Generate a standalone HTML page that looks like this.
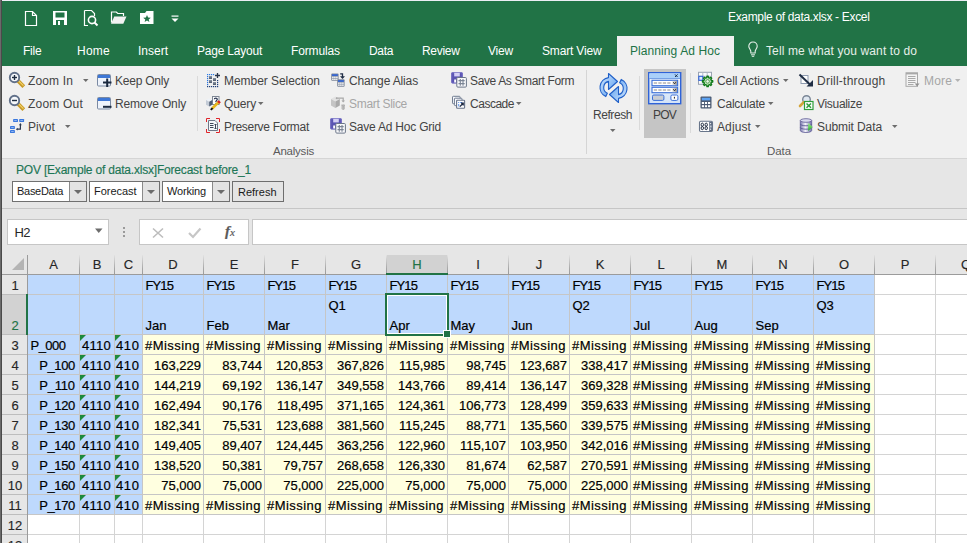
<!DOCTYPE html>
<html><head><meta charset="utf-8"><style>
html,body{margin:0;padding:0;}
body{width:967px;height:543px;overflow:hidden;position:relative;background:#ffffff;font-family:"Liberation Sans", sans-serif;}
.t{position:absolute;white-space:pre;}
svg{position:absolute;overflow:visible;}
</style></head><body>
<div style="position:absolute;left:0px;top:0px;width:967px;height:66px;background:#217346"></div>
<div style="position:absolute;left:0px;top:0px;width:967px;height:1px;background:#eceef5"></div>
<div style="position:absolute;left:617px;top:36px;width:117px;height:30px;background:#f0f0f0"></div>
<div style="position:absolute;left:0px;top:66px;width:967px;height:92px;background:#f0f0f0"></div>
<div style="position:absolute;left:0px;top:158px;width:967px;height:1px;background:#d5d5d5"></div>
<div style="position:absolute;left:0px;top:159px;width:967px;height:96px;background:#e6e6e6"></div>
<div style="position:absolute;left:0px;top:208px;width:967px;height:1px;background:#c6c6c6"></div>
<div style="position:absolute;left:12px;top:181px;width:75px;height:21px;background:#ffffff;border:1px solid #707070;box-sizing:border-box"></div>
<div style="position:absolute;left:69px;top:182px;width:17px;height:19px;background:#e3e3e3;border-left:1px solid #8a8a8a;box-sizing:border-box"></div>
<div style="position:absolute;left:89px;top:181px;width:71px;height:21px;background:#ffffff;border:1px solid #707070;box-sizing:border-box"></div>
<div style="position:absolute;left:142px;top:182px;width:17px;height:19px;background:#e3e3e3;border-left:1px solid #8a8a8a;box-sizing:border-box"></div>
<div style="position:absolute;left:162px;top:181px;width:68px;height:21px;background:#ffffff;border:1px solid #707070;box-sizing:border-box"></div>
<div style="position:absolute;left:212px;top:182px;width:17px;height:19px;background:#e3e3e3;border-left:1px solid #8a8a8a;box-sizing:border-box"></div>
<div style="position:absolute;left:232px;top:181px;width:52px;height:21px;background:#e4e4e4;border:1px solid #6e6e6e;box-sizing:border-box"></div>
<div style="position:absolute;left:7px;top:219px;width:102px;height:26px;background:#ffffff;border:1px solid #c6c6c6;box-sizing:border-box"></div>
<div style="position:absolute;left:123px;top:227px;width:2px;height:2px;background:#9a9a9a"></div>
<div style="position:absolute;left:123px;top:231px;width:2px;height:2px;background:#9a9a9a"></div>
<div style="position:absolute;left:123px;top:235px;width:2px;height:2px;background:#9a9a9a"></div>
<div style="position:absolute;left:139px;top:219px;width:110px;height:26px;background:#ffffff;border:1px solid #c6c6c6;box-sizing:border-box"></div>
<div style="position:absolute;left:252px;top:219px;width:730px;height:26px;background:#ffffff;border:1px solid #c6c6c6;box-sizing:border-box"></div>
<div style="position:absolute;left:2px;top:255px;width:965px;height:19px;background:#e6e6e6"></div>
<div style="position:absolute;left:2px;top:274px;width:25px;height:269px;background:#e6e6e6"></div>
<div style="position:absolute;left:387px;top:255px;width:60px;height:19px;background:#d2d2d2"></div>
<div style="position:absolute;left:2px;top:295px;width:25px;height:39px;background:#d2d2d2"></div>
<div style="position:absolute;left:28px;top:275px;width:847px;height:59px;background:#bed9fd"></div>
<div style="position:absolute;left:28px;top:335px;width:114px;height:179px;background:#bed9fd"></div>
<div style="position:absolute;left:143px;top:335px;width:732px;height:179px;background:#ffffe0"></div>
<div style="position:absolute;left:79px;top:275px;width:1px;height:239px;background:#c6c6c6"></div>
<div style="position:absolute;left:79px;top:514px;width:1px;height:29px;background:#d4d4d4"></div>
<div style="position:absolute;left:79px;top:255px;width:1px;height:19px;background:linear-gradient(#e2e2e2,#a8a8a8 70%,#9b9b9b)"></div>
<div style="position:absolute;left:114px;top:275px;width:1px;height:239px;background:#c6c6c6"></div>
<div style="position:absolute;left:114px;top:514px;width:1px;height:29px;background:#d4d4d4"></div>
<div style="position:absolute;left:114px;top:255px;width:1px;height:19px;background:linear-gradient(#e2e2e2,#a8a8a8 70%,#9b9b9b)"></div>
<div style="position:absolute;left:142px;top:275px;width:1px;height:239px;background:#c6c6c6"></div>
<div style="position:absolute;left:142px;top:514px;width:1px;height:29px;background:#d4d4d4"></div>
<div style="position:absolute;left:142px;top:255px;width:1px;height:19px;background:linear-gradient(#e2e2e2,#a8a8a8 70%,#9b9b9b)"></div>
<div style="position:absolute;left:203px;top:275px;width:1px;height:239px;background:#c6c6c6"></div>
<div style="position:absolute;left:203px;top:514px;width:1px;height:29px;background:#d4d4d4"></div>
<div style="position:absolute;left:203px;top:255px;width:1px;height:19px;background:linear-gradient(#e2e2e2,#a8a8a8 70%,#9b9b9b)"></div>
<div style="position:absolute;left:264px;top:275px;width:1px;height:239px;background:#c6c6c6"></div>
<div style="position:absolute;left:264px;top:514px;width:1px;height:29px;background:#d4d4d4"></div>
<div style="position:absolute;left:264px;top:255px;width:1px;height:19px;background:linear-gradient(#e2e2e2,#a8a8a8 70%,#9b9b9b)"></div>
<div style="position:absolute;left:325px;top:275px;width:1px;height:239px;background:#c6c6c6"></div>
<div style="position:absolute;left:325px;top:514px;width:1px;height:29px;background:#d4d4d4"></div>
<div style="position:absolute;left:325px;top:255px;width:1px;height:19px;background:linear-gradient(#e2e2e2,#a8a8a8 70%,#9b9b9b)"></div>
<div style="position:absolute;left:386px;top:275px;width:1px;height:239px;background:#c6c6c6"></div>
<div style="position:absolute;left:386px;top:514px;width:1px;height:29px;background:#d4d4d4"></div>
<div style="position:absolute;left:386px;top:255px;width:1px;height:19px;background:linear-gradient(#e2e2e2,#a8a8a8 70%,#9b9b9b)"></div>
<div style="position:absolute;left:447px;top:275px;width:1px;height:239px;background:#c6c6c6"></div>
<div style="position:absolute;left:447px;top:514px;width:1px;height:29px;background:#d4d4d4"></div>
<div style="position:absolute;left:447px;top:255px;width:1px;height:19px;background:linear-gradient(#e2e2e2,#a8a8a8 70%,#9b9b9b)"></div>
<div style="position:absolute;left:508px;top:275px;width:1px;height:239px;background:#c6c6c6"></div>
<div style="position:absolute;left:508px;top:514px;width:1px;height:29px;background:#d4d4d4"></div>
<div style="position:absolute;left:508px;top:255px;width:1px;height:19px;background:linear-gradient(#e2e2e2,#a8a8a8 70%,#9b9b9b)"></div>
<div style="position:absolute;left:569px;top:275px;width:1px;height:239px;background:#c6c6c6"></div>
<div style="position:absolute;left:569px;top:514px;width:1px;height:29px;background:#d4d4d4"></div>
<div style="position:absolute;left:569px;top:255px;width:1px;height:19px;background:linear-gradient(#e2e2e2,#a8a8a8 70%,#9b9b9b)"></div>
<div style="position:absolute;left:630px;top:275px;width:1px;height:239px;background:#c6c6c6"></div>
<div style="position:absolute;left:630px;top:514px;width:1px;height:29px;background:#d4d4d4"></div>
<div style="position:absolute;left:630px;top:255px;width:1px;height:19px;background:linear-gradient(#e2e2e2,#a8a8a8 70%,#9b9b9b)"></div>
<div style="position:absolute;left:691px;top:275px;width:1px;height:239px;background:#c6c6c6"></div>
<div style="position:absolute;left:691px;top:514px;width:1px;height:29px;background:#d4d4d4"></div>
<div style="position:absolute;left:691px;top:255px;width:1px;height:19px;background:linear-gradient(#e2e2e2,#a8a8a8 70%,#9b9b9b)"></div>
<div style="position:absolute;left:752px;top:275px;width:1px;height:239px;background:#c6c6c6"></div>
<div style="position:absolute;left:752px;top:514px;width:1px;height:29px;background:#d4d4d4"></div>
<div style="position:absolute;left:752px;top:255px;width:1px;height:19px;background:linear-gradient(#e2e2e2,#a8a8a8 70%,#9b9b9b)"></div>
<div style="position:absolute;left:813px;top:275px;width:1px;height:239px;background:#c6c6c6"></div>
<div style="position:absolute;left:813px;top:514px;width:1px;height:29px;background:#d4d4d4"></div>
<div style="position:absolute;left:813px;top:255px;width:1px;height:19px;background:linear-gradient(#e2e2e2,#a8a8a8 70%,#9b9b9b)"></div>
<div style="position:absolute;left:874px;top:275px;width:1px;height:239px;background:#c6c6c6"></div>
<div style="position:absolute;left:874px;top:514px;width:1px;height:29px;background:#d4d4d4"></div>
<div style="position:absolute;left:874px;top:255px;width:1px;height:19px;background:linear-gradient(#e2e2e2,#a8a8a8 70%,#9b9b9b)"></div>
<div style="position:absolute;left:935px;top:275px;width:1px;height:268px;background:#d4d4d4"></div>
<div style="position:absolute;left:935px;top:255px;width:1px;height:19px;background:linear-gradient(#e2e2e2,#a8a8a8 70%,#9b9b9b)"></div>
<div style="position:absolute;left:28px;top:294px;width:847px;height:1px;background:#c6c6c6"></div>
<div style="position:absolute;left:875px;top:294px;width:92px;height:1px;background:#d4d4d4"></div>
<div style="position:absolute;left:2px;top:294px;width:25px;height:1px;background:#bdbdbd"></div>
<div style="position:absolute;left:28px;top:334px;width:847px;height:1px;background:#c6c6c6"></div>
<div style="position:absolute;left:875px;top:334px;width:92px;height:1px;background:#d4d4d4"></div>
<div style="position:absolute;left:2px;top:334px;width:25px;height:1px;background:#bdbdbd"></div>
<div style="position:absolute;left:28px;top:354px;width:847px;height:1px;background:#c6c6c6"></div>
<div style="position:absolute;left:875px;top:354px;width:92px;height:1px;background:#d4d4d4"></div>
<div style="position:absolute;left:2px;top:354px;width:25px;height:1px;background:#bdbdbd"></div>
<div style="position:absolute;left:28px;top:374px;width:847px;height:1px;background:#c6c6c6"></div>
<div style="position:absolute;left:875px;top:374px;width:92px;height:1px;background:#d4d4d4"></div>
<div style="position:absolute;left:2px;top:374px;width:25px;height:1px;background:#bdbdbd"></div>
<div style="position:absolute;left:28px;top:394px;width:847px;height:1px;background:#c6c6c6"></div>
<div style="position:absolute;left:875px;top:394px;width:92px;height:1px;background:#d4d4d4"></div>
<div style="position:absolute;left:2px;top:394px;width:25px;height:1px;background:#bdbdbd"></div>
<div style="position:absolute;left:28px;top:414px;width:847px;height:1px;background:#c6c6c6"></div>
<div style="position:absolute;left:875px;top:414px;width:92px;height:1px;background:#d4d4d4"></div>
<div style="position:absolute;left:2px;top:414px;width:25px;height:1px;background:#bdbdbd"></div>
<div style="position:absolute;left:28px;top:434px;width:847px;height:1px;background:#c6c6c6"></div>
<div style="position:absolute;left:875px;top:434px;width:92px;height:1px;background:#d4d4d4"></div>
<div style="position:absolute;left:2px;top:434px;width:25px;height:1px;background:#bdbdbd"></div>
<div style="position:absolute;left:28px;top:454px;width:847px;height:1px;background:#c6c6c6"></div>
<div style="position:absolute;left:875px;top:454px;width:92px;height:1px;background:#d4d4d4"></div>
<div style="position:absolute;left:2px;top:454px;width:25px;height:1px;background:#bdbdbd"></div>
<div style="position:absolute;left:28px;top:474px;width:847px;height:1px;background:#c6c6c6"></div>
<div style="position:absolute;left:875px;top:474px;width:92px;height:1px;background:#d4d4d4"></div>
<div style="position:absolute;left:2px;top:474px;width:25px;height:1px;background:#bdbdbd"></div>
<div style="position:absolute;left:28px;top:494px;width:847px;height:1px;background:#c6c6c6"></div>
<div style="position:absolute;left:875px;top:494px;width:92px;height:1px;background:#d4d4d4"></div>
<div style="position:absolute;left:2px;top:494px;width:25px;height:1px;background:#bdbdbd"></div>
<div style="position:absolute;left:28px;top:514px;width:847px;height:1px;background:#c6c6c6"></div>
<div style="position:absolute;left:875px;top:514px;width:92px;height:1px;background:#d4d4d4"></div>
<div style="position:absolute;left:2px;top:514px;width:25px;height:1px;background:#bdbdbd"></div>
<div style="position:absolute;left:28px;top:534px;width:939px;height:1px;background:#d4d4d4"></div>
<div style="position:absolute;left:2px;top:534px;width:25px;height:1px;background:#bdbdbd"></div>
<div style="position:absolute;left:2px;top:274px;width:965px;height:1px;background:#9b9b9b"></div>
<div style="position:absolute;left:27px;top:255px;width:1px;height:288px;background:#9b9b9b"></div>
<div style="position:absolute;left:386px;top:273px;width:62px;height:2px;background:#217346"></div>
<div style="position:absolute;left:26px;top:294px;width:2px;height:41px;background:#217346"></div>
<div style="position:absolute;left:385px;top:293px;width:64px;height:43px;border:2px solid #217346;box-sizing:border-box"></div>
<div style="position:absolute;left:387px;top:295px;width:60px;height:39px;border:1px solid #ffffff;box-sizing:border-box"></div>
<div style="position:absolute;left:443px;top:330px;width:8px;height:8px;background:#ffffff"></div>
<div style="position:absolute;left:444px;top:331px;width:6px;height:6px;background:#217346"></div>
<div style="position:absolute;left:0px;top:0px;width:1px;height:543px;background:#6a6a6a"></div>
<div style="position:absolute;left:1px;top:0px;width:1px;height:543px;background:#4a4a4a"></div>
<div style="position:absolute;left:197px;top:76px;width:1px;height:55px;background:#dadada"></div>
<div style="position:absolute;left:586px;top:70px;width:1px;height:84px;background:#d5d5d5"></div>
<div style="position:absolute;left:639px;top:76px;width:1px;height:54px;background:#dadada"></div>
<div style="position:absolute;left:690px;top:73px;width:1px;height:60px;background:#dadada"></div>
<div style="position:absolute;left:644px;top:69px;width:42px;height:69px;background:#c5c5c5"></div>
<div class="t" style="left:728.00px;top:10.34px;font-size:12px;line-height:15px;color:#ffffff;letter-spacing:-0.330px;">Example of data.xlsx - Excel</div>
<div class="t" style="left:23.00px;top:44.34px;font-size:12px;line-height:15px;color:#ffffff;letter-spacing:-0.211px;">File</div>
<div class="t" style="left:77.00px;top:44.34px;font-size:12px;line-height:15px;color:#ffffff;letter-spacing:0.246px;">Home</div>
<div class="t" style="left:138.00px;top:44.34px;font-size:12px;line-height:15px;color:#ffffff;">Insert</div>
<div class="t" style="left:197.00px;top:44.34px;font-size:12px;line-height:15px;color:#ffffff;letter-spacing:-0.217px;">Page Layout</div>
<div class="t" style="left:291.00px;top:44.34px;font-size:12px;line-height:15px;color:#ffffff;letter-spacing:-0.127px;">Formulas</div>
<div class="t" style="left:369.00px;top:44.34px;font-size:12px;line-height:15px;color:#ffffff;letter-spacing:-0.340px;">Data</div>
<div class="t" style="left:422.00px;top:44.34px;font-size:12px;line-height:15px;color:#ffffff;letter-spacing:-0.310px;">Review</div>
<div class="t" style="left:488.00px;top:44.34px;font-size:12px;line-height:15px;color:#ffffff;letter-spacing:-0.199px;">View</div>
<div class="t" style="left:542.00px;top:44.34px;font-size:12px;line-height:15px;color:#ffffff;letter-spacing:-0.164px;">Smart View</div>
<div class="t" style="left:630.00px;top:44.34px;font-size:12px;line-height:15px;color:#217346;letter-spacing:0.084px;">Planning Ad Hoc</div>
<div class="t" style="left:766.00px;top:44.34px;font-size:12px;line-height:15px;color:#e6efe9;letter-spacing:0.108px;">Tell me what you want to do</div>
<div class="t" style="left:28.00px;top:74.34px;font-size:12px;line-height:15px;color:#444444;letter-spacing:0.141px;">Zoom In</div>
<div class="t" style="left:28.00px;top:97.34px;font-size:12px;line-height:15px;color:#444444;letter-spacing:0.205px;">Zoom Out</div>
<div class="t" style="left:28.00px;top:120.34px;font-size:12px;line-height:15px;color:#444444;letter-spacing:0.062px;">Pivot</div>
<div class="t" style="left:115.00px;top:74.34px;font-size:12px;line-height:15px;color:#444444;letter-spacing:-0.227px;">Keep Only</div>
<div class="t" style="left:115.00px;top:97.34px;font-size:12px;line-height:15px;color:#444444;letter-spacing:-0.155px;">Remove Only</div>
<div class="t" style="left:224.00px;top:74.34px;font-size:12px;line-height:15px;color:#444444;letter-spacing:-0.045px;">Member Selection</div>
<div class="t" style="left:224.00px;top:97.34px;font-size:12px;line-height:15px;color:#444444;letter-spacing:-0.138px;">Query</div>
<div class="t" style="left:224.00px;top:120.34px;font-size:12px;line-height:15px;color:#444444;letter-spacing:-0.291px;">Preserve Format</div>
<div class="t" style="left:349.00px;top:74.34px;font-size:12px;line-height:15px;color:#444444;letter-spacing:-0.143px;">Change Alias</div>
<div class="t" style="left:349.00px;top:97.34px;font-size:12px;line-height:15px;color:#a6a6a6;letter-spacing:-0.305px;">Smart Slice</div>
<div class="t" style="left:349.00px;top:120.34px;font-size:12px;line-height:15px;color:#444444;letter-spacing:-0.212px;">Save Ad Hoc Grid</div>
<div class="t" style="left:470.00px;top:74.34px;font-size:12px;line-height:15px;color:#444444;letter-spacing:-0.372px;">Save As Smart Form</div>
<div class="t" style="left:470.00px;top:97.34px;font-size:12px;line-height:15px;color:#444444;letter-spacing:-0.482px;">Cascade</div>
<div class="t" style="left:593.00px;top:108.34px;font-size:12px;line-height:15px;color:#444444;letter-spacing:-0.433px;">Refresh</div>
<div class="t" style="left:653.00px;top:108.34px;font-size:12px;line-height:15px;color:#404040;letter-spacing:-0.781px;">POV</div>
<div class="t" style="left:717.00px;top:74.34px;font-size:12px;line-height:15px;color:#444444;letter-spacing:-0.059px;">Cell Actions</div>
<div class="t" style="left:717.00px;top:97.34px;font-size:12px;line-height:15px;color:#444444;letter-spacing:-0.226px;">Calculate</div>
<div class="t" style="left:717.00px;top:120.34px;font-size:12px;line-height:15px;color:#444444;letter-spacing:0.107px;">Adjust</div>
<div class="t" style="left:817.00px;top:74.34px;font-size:12px;line-height:15px;color:#444444;letter-spacing:0.242px;">Drill-through</div>
<div class="t" style="left:817.00px;top:97.34px;font-size:12px;line-height:15px;color:#444444;letter-spacing:-0.312px;">Visualize</div>
<div class="t" style="left:817.00px;top:120.34px;font-size:12px;line-height:15px;color:#444444;letter-spacing:-0.094px;">Submit Data</div>
<div class="t" style="left:924.00px;top:74.34px;font-size:12px;line-height:15px;color:#a6a6a6;letter-spacing:0.164px;">More</div>
<div class="t" style="left:273.00px;top:143.52px;font-size:11.5px;line-height:14px;color:#5a5a5a;letter-spacing:-0.229px;">Analysis</div>
<div class="t" style="left:767.00px;top:143.52px;font-size:11.5px;line-height:14px;color:#5a5a5a;letter-spacing:-0.074px;">Data</div>
<div class="t" style="left:16.00px;top:163.34px;font-size:12px;line-height:15px;color:#1d7656;letter-spacing:-0.197px;-webkit-text-stroke:0.15px #1d7656">POV [Example of data.xlsx]Forecast before_1</div>
<div class="t" style="left:17.00px;top:183.69px;font-size:11px;line-height:14px;color:#1a1a1a;letter-spacing:-0.289px;">BaseData</div>
<div class="t" style="left:94.00px;top:183.69px;font-size:11px;line-height:14px;color:#1a1a1a;letter-spacing:-0.037px;">Forecast</div>
<div class="t" style="left:167.00px;top:183.69px;font-size:11px;line-height:14px;color:#1a1a1a;letter-spacing:-0.165px;">Working</div>
<div class="t" style="left:238.00px;top:185.19px;font-size:11px;line-height:14px;color:#1a1a1a;">Refresh</div>
<div class="t" style="left:14.50px;top:224.50px;font-size:13px;line-height:16px;color:#262626;letter-spacing:-0.562px;">H2</div>
<div class="t" style="left:49.16px;top:256.50px;font-size:13px;line-height:16px;color:#262626;-webkit-text-stroke:0.15px #262626">A</div>
<div class="t" style="left:92.66px;top:256.50px;font-size:13px;line-height:16px;color:#262626;-webkit-text-stroke:0.15px #262626">B</div>
<div class="t" style="left:123.80px;top:256.50px;font-size:13px;line-height:16px;color:#262626;-webkit-text-stroke:0.15px #262626">C</div>
<div class="t" style="left:168.30px;top:256.50px;font-size:13px;line-height:16px;color:#262626;-webkit-text-stroke:0.15px #262626">D</div>
<div class="t" style="left:229.66px;top:256.50px;font-size:13px;line-height:16px;color:#262626;-webkit-text-stroke:0.15px #262626">E</div>
<div class="t" style="left:291.02px;top:256.50px;font-size:13px;line-height:16px;color:#262626;-webkit-text-stroke:0.15px #262626">F</div>
<div class="t" style="left:350.94px;top:256.50px;font-size:13px;line-height:16px;color:#262626;-webkit-text-stroke:0.15px #262626">G</div>
<div class="t" style="left:412.30px;top:256.50px;font-size:13px;line-height:16px;color:#217346;-webkit-text-stroke:0.15px #217346">H</div>
<div class="t" style="left:476.19px;top:256.50px;font-size:13px;line-height:16px;color:#262626;-webkit-text-stroke:0.15px #262626">I</div>
<div class="t" style="left:535.75px;top:256.50px;font-size:13px;line-height:16px;color:#262626;-webkit-text-stroke:0.15px #262626">J</div>
<div class="t" style="left:595.66px;top:256.50px;font-size:13px;line-height:16px;color:#262626;-webkit-text-stroke:0.15px #262626">K</div>
<div class="t" style="left:657.38px;top:256.50px;font-size:13px;line-height:16px;color:#262626;-webkit-text-stroke:0.15px #262626">L</div>
<div class="t" style="left:716.58px;top:256.50px;font-size:13px;line-height:16px;color:#262626;-webkit-text-stroke:0.15px #262626">M</div>
<div class="t" style="left:778.30px;top:256.50px;font-size:13px;line-height:16px;color:#262626;-webkit-text-stroke:0.15px #262626">N</div>
<div class="t" style="left:838.94px;top:256.50px;font-size:13px;line-height:16px;color:#262626;-webkit-text-stroke:0.15px #262626">O</div>
<div class="t" style="left:900.66px;top:256.50px;font-size:13px;line-height:16px;color:#262626;-webkit-text-stroke:0.15px #262626">P</div>
<div class="t" style="left:960.94px;top:256.50px;font-size:13px;line-height:16px;color:#262626;-webkit-text-stroke:0.15px #262626">Q</div>
<div class="t" style="left:11.38px;top:277.50px;font-size:13px;line-height:16px;color:#262626;-webkit-text-stroke:0.15px #262626">1</div>
<div class="t" style="left:11.38px;top:317.50px;font-size:13px;line-height:16px;color:#217346;-webkit-text-stroke:0.15px #217346">2</div>
<div class="t" style="left:11.38px;top:337.50px;font-size:13px;line-height:16px;color:#262626;-webkit-text-stroke:0.15px #262626">3</div>
<div class="t" style="left:11.38px;top:357.50px;font-size:13px;line-height:16px;color:#262626;-webkit-text-stroke:0.15px #262626">4</div>
<div class="t" style="left:11.38px;top:377.50px;font-size:13px;line-height:16px;color:#262626;-webkit-text-stroke:0.15px #262626">5</div>
<div class="t" style="left:11.38px;top:397.50px;font-size:13px;line-height:16px;color:#262626;-webkit-text-stroke:0.15px #262626">6</div>
<div class="t" style="left:11.38px;top:417.50px;font-size:13px;line-height:16px;color:#262626;-webkit-text-stroke:0.15px #262626">7</div>
<div class="t" style="left:11.38px;top:437.50px;font-size:13px;line-height:16px;color:#262626;-webkit-text-stroke:0.15px #262626">8</div>
<div class="t" style="left:11.38px;top:457.50px;font-size:13px;line-height:16px;color:#262626;-webkit-text-stroke:0.15px #262626">9</div>
<div class="t" style="left:7.77px;top:477.50px;font-size:13px;line-height:16px;color:#262626;-webkit-text-stroke:0.15px #262626">10</div>
<div class="t" style="left:8.25px;top:497.50px;font-size:13px;line-height:16px;color:#262626;-webkit-text-stroke:0.15px #262626">11</div>
<div class="t" style="left:7.77px;top:517.50px;font-size:13px;line-height:16px;color:#262626;-webkit-text-stroke:0.15px #262626">12</div>
<div class="t" style="left:7.77px;top:537.50px;font-size:13px;line-height:16px;color:#262626;-webkit-text-stroke:0.15px #262626">13</div>
<div class="t" style="left:145.50px;top:277.50px;font-size:13px;line-height:16px;color:#000000;letter-spacing:-0.895px;-webkit-text-stroke:0.2px #000">FY15</div>
<div class="t" style="left:145.50px;top:317.50px;font-size:13px;line-height:16px;color:#000000;-webkit-text-stroke:0.2px #000">Jan</div>
<div class="t" style="left:206.50px;top:277.50px;font-size:13px;line-height:16px;color:#000000;letter-spacing:-0.895px;-webkit-text-stroke:0.2px #000">FY15</div>
<div class="t" style="left:206.50px;top:317.50px;font-size:13px;line-height:16px;color:#000000;-webkit-text-stroke:0.2px #000">Feb</div>
<div class="t" style="left:267.50px;top:277.50px;font-size:13px;line-height:16px;color:#000000;letter-spacing:-0.895px;-webkit-text-stroke:0.2px #000">FY15</div>
<div class="t" style="left:267.50px;top:317.50px;font-size:13px;line-height:16px;color:#000000;-webkit-text-stroke:0.2px #000">Mar</div>
<div class="t" style="left:328.50px;top:277.50px;font-size:13px;line-height:16px;color:#000000;letter-spacing:-0.895px;-webkit-text-stroke:0.2px #000">FY15</div>
<div class="t" style="left:328.50px;top:297.50px;font-size:13px;line-height:16px;color:#000000;-webkit-text-stroke:0.2px #000">Q1</div>
<div class="t" style="left:389.50px;top:277.50px;font-size:13px;line-height:16px;color:#000000;letter-spacing:-0.895px;-webkit-text-stroke:0.2px #000">FY15</div>
<div class="t" style="left:389.50px;top:317.50px;font-size:13px;line-height:16px;color:#000000;-webkit-text-stroke:0.2px #000">Apr</div>
<div class="t" style="left:450.50px;top:277.50px;font-size:13px;line-height:16px;color:#000000;letter-spacing:-0.895px;-webkit-text-stroke:0.2px #000">FY15</div>
<div class="t" style="left:450.50px;top:317.50px;font-size:13px;line-height:16px;color:#000000;-webkit-text-stroke:0.2px #000">May</div>
<div class="t" style="left:511.50px;top:277.50px;font-size:13px;line-height:16px;color:#000000;letter-spacing:-0.895px;-webkit-text-stroke:0.2px #000">FY15</div>
<div class="t" style="left:511.50px;top:317.50px;font-size:13px;line-height:16px;color:#000000;-webkit-text-stroke:0.2px #000">Jun</div>
<div class="t" style="left:572.50px;top:277.50px;font-size:13px;line-height:16px;color:#000000;letter-spacing:-0.895px;-webkit-text-stroke:0.2px #000">FY15</div>
<div class="t" style="left:572.50px;top:297.50px;font-size:13px;line-height:16px;color:#000000;-webkit-text-stroke:0.2px #000">Q2</div>
<div class="t" style="left:633.50px;top:277.50px;font-size:13px;line-height:16px;color:#000000;letter-spacing:-0.895px;-webkit-text-stroke:0.2px #000">FY15</div>
<div class="t" style="left:633.50px;top:317.50px;font-size:13px;line-height:16px;color:#000000;-webkit-text-stroke:0.2px #000">Jul</div>
<div class="t" style="left:694.50px;top:277.50px;font-size:13px;line-height:16px;color:#000000;letter-spacing:-0.895px;-webkit-text-stroke:0.2px #000">FY15</div>
<div class="t" style="left:694.50px;top:317.50px;font-size:13px;line-height:16px;color:#000000;-webkit-text-stroke:0.2px #000">Aug</div>
<div class="t" style="left:755.50px;top:277.50px;font-size:13px;line-height:16px;color:#000000;letter-spacing:-0.895px;-webkit-text-stroke:0.2px #000">FY15</div>
<div class="t" style="left:755.50px;top:317.50px;font-size:13px;line-height:16px;color:#000000;-webkit-text-stroke:0.2px #000">Sep</div>
<div class="t" style="left:816.50px;top:277.50px;font-size:13px;line-height:16px;color:#000000;letter-spacing:-0.895px;-webkit-text-stroke:0.2px #000">FY15</div>
<div class="t" style="left:816.50px;top:297.50px;font-size:13px;line-height:16px;color:#000000;-webkit-text-stroke:0.2px #000">Q3</div>
<div class="t" style="left:30.50px;top:337.50px;font-size:13px;line-height:16px;color:#000000;letter-spacing:-0.519px;-webkit-text-stroke:0.2px #000">P_000</div>
<div class="t" style="left:82.00px;top:337.50px;font-size:13px;line-height:16px;color:#000000;letter-spacing:0.258px;-webkit-text-stroke:0.2px #000">4110</div>
<div class="t" style="left:116.00px;top:337.50px;font-size:13px;line-height:16px;color:#000000;letter-spacing:0.599px;-webkit-text-stroke:0.2px #000">410</div>
<div class="t" style="left:145.00px;top:337.50px;font-size:13px;line-height:16px;color:#000000;letter-spacing:0.463px;-webkit-text-stroke:0.2px #000">#Missing</div>
<div class="t" style="left:206.00px;top:337.50px;font-size:13px;line-height:16px;color:#000000;letter-spacing:0.463px;-webkit-text-stroke:0.2px #000">#Missing</div>
<div class="t" style="left:267.00px;top:337.50px;font-size:13px;line-height:16px;color:#000000;letter-spacing:0.463px;-webkit-text-stroke:0.2px #000">#Missing</div>
<div class="t" style="left:328.00px;top:337.50px;font-size:13px;line-height:16px;color:#000000;letter-spacing:0.463px;-webkit-text-stroke:0.2px #000">#Missing</div>
<div class="t" style="left:389.00px;top:337.50px;font-size:13px;line-height:16px;color:#000000;letter-spacing:0.463px;-webkit-text-stroke:0.2px #000">#Missing</div>
<div class="t" style="left:450.00px;top:337.50px;font-size:13px;line-height:16px;color:#000000;letter-spacing:0.463px;-webkit-text-stroke:0.2px #000">#Missing</div>
<div class="t" style="left:511.00px;top:337.50px;font-size:13px;line-height:16px;color:#000000;letter-spacing:0.463px;-webkit-text-stroke:0.2px #000">#Missing</div>
<div class="t" style="left:572.00px;top:337.50px;font-size:13px;line-height:16px;color:#000000;letter-spacing:0.463px;-webkit-text-stroke:0.2px #000">#Missing</div>
<div class="t" style="left:633.00px;top:337.50px;font-size:13px;line-height:16px;color:#000000;letter-spacing:0.463px;-webkit-text-stroke:0.2px #000">#Missing</div>
<div class="t" style="left:694.00px;top:337.50px;font-size:13px;line-height:16px;color:#000000;letter-spacing:0.463px;-webkit-text-stroke:0.2px #000">#Missing</div>
<div class="t" style="left:755.00px;top:337.50px;font-size:13px;line-height:16px;color:#000000;letter-spacing:0.463px;-webkit-text-stroke:0.2px #000">#Missing</div>
<div class="t" style="left:816.00px;top:337.50px;font-size:13px;line-height:16px;color:#000000;letter-spacing:0.463px;-webkit-text-stroke:0.2px #000">#Missing</div>
<div class="t" style="left:39.30px;top:357.50px;font-size:13px;line-height:16px;color:#000000;letter-spacing:-0.419px;-webkit-text-stroke:0.2px #000">P_100</div>
<div class="t" style="left:82.00px;top:357.50px;font-size:13px;line-height:16px;color:#000000;letter-spacing:0.258px;-webkit-text-stroke:0.2px #000">4110</div>
<div class="t" style="left:116.00px;top:357.50px;font-size:13px;line-height:16px;color:#000000;letter-spacing:0.599px;-webkit-text-stroke:0.2px #000">410</div>
<div class="t" style="left:154.00px;top:357.50px;font-size:13px;line-height:16px;color:#000000;-webkit-text-stroke:0.2px #000">163,229</div>
<div class="t" style="left:222.23px;top:357.50px;font-size:13px;line-height:16px;color:#000000;-webkit-text-stroke:0.2px #000">83,744</div>
<div class="t" style="left:276.00px;top:357.50px;font-size:13px;line-height:16px;color:#000000;-webkit-text-stroke:0.2px #000">120,853</div>
<div class="t" style="left:337.00px;top:357.50px;font-size:13px;line-height:16px;color:#000000;-webkit-text-stroke:0.2px #000">367,826</div>
<div class="t" style="left:398.97px;top:357.50px;font-size:13px;line-height:16px;color:#000000;-webkit-text-stroke:0.2px #000">115,985</div>
<div class="t" style="left:466.23px;top:357.50px;font-size:13px;line-height:16px;color:#000000;-webkit-text-stroke:0.2px #000">98,745</div>
<div class="t" style="left:520.00px;top:357.50px;font-size:13px;line-height:16px;color:#000000;-webkit-text-stroke:0.2px #000">123,687</div>
<div class="t" style="left:581.00px;top:357.50px;font-size:13px;line-height:16px;color:#000000;-webkit-text-stroke:0.2px #000">338,417</div>
<div class="t" style="left:633.00px;top:357.50px;font-size:13px;line-height:16px;color:#000000;letter-spacing:0.463px;-webkit-text-stroke:0.2px #000">#Missing</div>
<div class="t" style="left:694.00px;top:357.50px;font-size:13px;line-height:16px;color:#000000;letter-spacing:0.463px;-webkit-text-stroke:0.2px #000">#Missing</div>
<div class="t" style="left:755.00px;top:357.50px;font-size:13px;line-height:16px;color:#000000;letter-spacing:0.463px;-webkit-text-stroke:0.2px #000">#Missing</div>
<div class="t" style="left:816.00px;top:357.50px;font-size:13px;line-height:16px;color:#000000;letter-spacing:0.463px;-webkit-text-stroke:0.2px #000">#Missing</div>
<div class="t" style="left:39.30px;top:377.50px;font-size:13px;line-height:16px;color:#000000;letter-spacing:-0.228px;-webkit-text-stroke:0.2px #000">P_110</div>
<div class="t" style="left:82.00px;top:377.50px;font-size:13px;line-height:16px;color:#000000;letter-spacing:0.258px;-webkit-text-stroke:0.2px #000">4110</div>
<div class="t" style="left:116.00px;top:377.50px;font-size:13px;line-height:16px;color:#000000;letter-spacing:0.599px;-webkit-text-stroke:0.2px #000">410</div>
<div class="t" style="left:154.00px;top:377.50px;font-size:13px;line-height:16px;color:#000000;-webkit-text-stroke:0.2px #000">144,219</div>
<div class="t" style="left:222.23px;top:377.50px;font-size:13px;line-height:16px;color:#000000;-webkit-text-stroke:0.2px #000">69,192</div>
<div class="t" style="left:276.00px;top:377.50px;font-size:13px;line-height:16px;color:#000000;-webkit-text-stroke:0.2px #000">136,147</div>
<div class="t" style="left:337.00px;top:377.50px;font-size:13px;line-height:16px;color:#000000;-webkit-text-stroke:0.2px #000">349,558</div>
<div class="t" style="left:398.00px;top:377.50px;font-size:13px;line-height:16px;color:#000000;-webkit-text-stroke:0.2px #000">143,766</div>
<div class="t" style="left:466.23px;top:377.50px;font-size:13px;line-height:16px;color:#000000;-webkit-text-stroke:0.2px #000">89,414</div>
<div class="t" style="left:520.00px;top:377.50px;font-size:13px;line-height:16px;color:#000000;-webkit-text-stroke:0.2px #000">136,147</div>
<div class="t" style="left:581.00px;top:377.50px;font-size:13px;line-height:16px;color:#000000;-webkit-text-stroke:0.2px #000">369,328</div>
<div class="t" style="left:633.00px;top:377.50px;font-size:13px;line-height:16px;color:#000000;letter-spacing:0.463px;-webkit-text-stroke:0.2px #000">#Missing</div>
<div class="t" style="left:694.00px;top:377.50px;font-size:13px;line-height:16px;color:#000000;letter-spacing:0.463px;-webkit-text-stroke:0.2px #000">#Missing</div>
<div class="t" style="left:755.00px;top:377.50px;font-size:13px;line-height:16px;color:#000000;letter-spacing:0.463px;-webkit-text-stroke:0.2px #000">#Missing</div>
<div class="t" style="left:816.00px;top:377.50px;font-size:13px;line-height:16px;color:#000000;letter-spacing:0.463px;-webkit-text-stroke:0.2px #000">#Missing</div>
<div class="t" style="left:39.30px;top:397.50px;font-size:13px;line-height:16px;color:#000000;letter-spacing:-0.419px;-webkit-text-stroke:0.2px #000">P_120</div>
<div class="t" style="left:82.00px;top:397.50px;font-size:13px;line-height:16px;color:#000000;letter-spacing:0.258px;-webkit-text-stroke:0.2px #000">4110</div>
<div class="t" style="left:116.00px;top:397.50px;font-size:13px;line-height:16px;color:#000000;letter-spacing:0.599px;-webkit-text-stroke:0.2px #000">410</div>
<div class="t" style="left:154.00px;top:397.50px;font-size:13px;line-height:16px;color:#000000;-webkit-text-stroke:0.2px #000">162,494</div>
<div class="t" style="left:222.23px;top:397.50px;font-size:13px;line-height:16px;color:#000000;-webkit-text-stroke:0.2px #000">90,176</div>
<div class="t" style="left:276.97px;top:397.50px;font-size:13px;line-height:16px;color:#000000;-webkit-text-stroke:0.2px #000">118,495</div>
<div class="t" style="left:337.00px;top:397.50px;font-size:13px;line-height:16px;color:#000000;-webkit-text-stroke:0.2px #000">371,165</div>
<div class="t" style="left:398.00px;top:397.50px;font-size:13px;line-height:16px;color:#000000;-webkit-text-stroke:0.2px #000">124,361</div>
<div class="t" style="left:459.00px;top:397.50px;font-size:13px;line-height:16px;color:#000000;-webkit-text-stroke:0.2px #000">106,773</div>
<div class="t" style="left:520.00px;top:397.50px;font-size:13px;line-height:16px;color:#000000;-webkit-text-stroke:0.2px #000">128,499</div>
<div class="t" style="left:581.00px;top:397.50px;font-size:13px;line-height:16px;color:#000000;-webkit-text-stroke:0.2px #000">359,633</div>
<div class="t" style="left:633.00px;top:397.50px;font-size:13px;line-height:16px;color:#000000;letter-spacing:0.463px;-webkit-text-stroke:0.2px #000">#Missing</div>
<div class="t" style="left:694.00px;top:397.50px;font-size:13px;line-height:16px;color:#000000;letter-spacing:0.463px;-webkit-text-stroke:0.2px #000">#Missing</div>
<div class="t" style="left:755.00px;top:397.50px;font-size:13px;line-height:16px;color:#000000;letter-spacing:0.463px;-webkit-text-stroke:0.2px #000">#Missing</div>
<div class="t" style="left:816.00px;top:397.50px;font-size:13px;line-height:16px;color:#000000;letter-spacing:0.463px;-webkit-text-stroke:0.2px #000">#Missing</div>
<div class="t" style="left:39.30px;top:417.50px;font-size:13px;line-height:16px;color:#000000;letter-spacing:-0.419px;-webkit-text-stroke:0.2px #000">P_130</div>
<div class="t" style="left:82.00px;top:417.50px;font-size:13px;line-height:16px;color:#000000;letter-spacing:0.258px;-webkit-text-stroke:0.2px #000">4110</div>
<div class="t" style="left:116.00px;top:417.50px;font-size:13px;line-height:16px;color:#000000;letter-spacing:0.599px;-webkit-text-stroke:0.2px #000">410</div>
<div class="t" style="left:154.00px;top:417.50px;font-size:13px;line-height:16px;color:#000000;-webkit-text-stroke:0.2px #000">182,341</div>
<div class="t" style="left:222.23px;top:417.50px;font-size:13px;line-height:16px;color:#000000;-webkit-text-stroke:0.2px #000">75,531</div>
<div class="t" style="left:276.00px;top:417.50px;font-size:13px;line-height:16px;color:#000000;-webkit-text-stroke:0.2px #000">123,688</div>
<div class="t" style="left:337.00px;top:417.50px;font-size:13px;line-height:16px;color:#000000;-webkit-text-stroke:0.2px #000">381,560</div>
<div class="t" style="left:398.97px;top:417.50px;font-size:13px;line-height:16px;color:#000000;-webkit-text-stroke:0.2px #000">115,245</div>
<div class="t" style="left:466.23px;top:417.50px;font-size:13px;line-height:16px;color:#000000;-webkit-text-stroke:0.2px #000">88,771</div>
<div class="t" style="left:520.00px;top:417.50px;font-size:13px;line-height:16px;color:#000000;-webkit-text-stroke:0.2px #000">135,560</div>
<div class="t" style="left:581.00px;top:417.50px;font-size:13px;line-height:16px;color:#000000;-webkit-text-stroke:0.2px #000">339,575</div>
<div class="t" style="left:633.00px;top:417.50px;font-size:13px;line-height:16px;color:#000000;letter-spacing:0.463px;-webkit-text-stroke:0.2px #000">#Missing</div>
<div class="t" style="left:694.00px;top:417.50px;font-size:13px;line-height:16px;color:#000000;letter-spacing:0.463px;-webkit-text-stroke:0.2px #000">#Missing</div>
<div class="t" style="left:755.00px;top:417.50px;font-size:13px;line-height:16px;color:#000000;letter-spacing:0.463px;-webkit-text-stroke:0.2px #000">#Missing</div>
<div class="t" style="left:816.00px;top:417.50px;font-size:13px;line-height:16px;color:#000000;letter-spacing:0.463px;-webkit-text-stroke:0.2px #000">#Missing</div>
<div class="t" style="left:39.30px;top:437.50px;font-size:13px;line-height:16px;color:#000000;letter-spacing:-0.419px;-webkit-text-stroke:0.2px #000">P_140</div>
<div class="t" style="left:82.00px;top:437.50px;font-size:13px;line-height:16px;color:#000000;letter-spacing:0.258px;-webkit-text-stroke:0.2px #000">4110</div>
<div class="t" style="left:116.00px;top:437.50px;font-size:13px;line-height:16px;color:#000000;letter-spacing:0.599px;-webkit-text-stroke:0.2px #000">410</div>
<div class="t" style="left:154.00px;top:437.50px;font-size:13px;line-height:16px;color:#000000;-webkit-text-stroke:0.2px #000">149,405</div>
<div class="t" style="left:222.23px;top:437.50px;font-size:13px;line-height:16px;color:#000000;-webkit-text-stroke:0.2px #000">89,407</div>
<div class="t" style="left:276.00px;top:437.50px;font-size:13px;line-height:16px;color:#000000;-webkit-text-stroke:0.2px #000">124,445</div>
<div class="t" style="left:337.00px;top:437.50px;font-size:13px;line-height:16px;color:#000000;-webkit-text-stroke:0.2px #000">363,256</div>
<div class="t" style="left:398.00px;top:437.50px;font-size:13px;line-height:16px;color:#000000;-webkit-text-stroke:0.2px #000">122,960</div>
<div class="t" style="left:459.97px;top:437.50px;font-size:13px;line-height:16px;color:#000000;-webkit-text-stroke:0.2px #000">115,107</div>
<div class="t" style="left:520.00px;top:437.50px;font-size:13px;line-height:16px;color:#000000;-webkit-text-stroke:0.2px #000">103,950</div>
<div class="t" style="left:581.00px;top:437.50px;font-size:13px;line-height:16px;color:#000000;-webkit-text-stroke:0.2px #000">342,016</div>
<div class="t" style="left:633.00px;top:437.50px;font-size:13px;line-height:16px;color:#000000;letter-spacing:0.463px;-webkit-text-stroke:0.2px #000">#Missing</div>
<div class="t" style="left:694.00px;top:437.50px;font-size:13px;line-height:16px;color:#000000;letter-spacing:0.463px;-webkit-text-stroke:0.2px #000">#Missing</div>
<div class="t" style="left:755.00px;top:437.50px;font-size:13px;line-height:16px;color:#000000;letter-spacing:0.463px;-webkit-text-stroke:0.2px #000">#Missing</div>
<div class="t" style="left:816.00px;top:437.50px;font-size:13px;line-height:16px;color:#000000;letter-spacing:0.463px;-webkit-text-stroke:0.2px #000">#Missing</div>
<div class="t" style="left:39.30px;top:457.50px;font-size:13px;line-height:16px;color:#000000;letter-spacing:-0.419px;-webkit-text-stroke:0.2px #000">P_150</div>
<div class="t" style="left:82.00px;top:457.50px;font-size:13px;line-height:16px;color:#000000;letter-spacing:0.258px;-webkit-text-stroke:0.2px #000">4110</div>
<div class="t" style="left:116.00px;top:457.50px;font-size:13px;line-height:16px;color:#000000;letter-spacing:0.599px;-webkit-text-stroke:0.2px #000">410</div>
<div class="t" style="left:154.00px;top:457.50px;font-size:13px;line-height:16px;color:#000000;-webkit-text-stroke:0.2px #000">138,520</div>
<div class="t" style="left:222.23px;top:457.50px;font-size:13px;line-height:16px;color:#000000;-webkit-text-stroke:0.2px #000">50,381</div>
<div class="t" style="left:283.23px;top:457.50px;font-size:13px;line-height:16px;color:#000000;-webkit-text-stroke:0.2px #000">79,757</div>
<div class="t" style="left:337.00px;top:457.50px;font-size:13px;line-height:16px;color:#000000;-webkit-text-stroke:0.2px #000">268,658</div>
<div class="t" style="left:398.00px;top:457.50px;font-size:13px;line-height:16px;color:#000000;-webkit-text-stroke:0.2px #000">126,330</div>
<div class="t" style="left:466.23px;top:457.50px;font-size:13px;line-height:16px;color:#000000;-webkit-text-stroke:0.2px #000">81,674</div>
<div class="t" style="left:527.23px;top:457.50px;font-size:13px;line-height:16px;color:#000000;-webkit-text-stroke:0.2px #000">62,587</div>
<div class="t" style="left:581.00px;top:457.50px;font-size:13px;line-height:16px;color:#000000;-webkit-text-stroke:0.2px #000">270,591</div>
<div class="t" style="left:633.00px;top:457.50px;font-size:13px;line-height:16px;color:#000000;letter-spacing:0.463px;-webkit-text-stroke:0.2px #000">#Missing</div>
<div class="t" style="left:694.00px;top:457.50px;font-size:13px;line-height:16px;color:#000000;letter-spacing:0.463px;-webkit-text-stroke:0.2px #000">#Missing</div>
<div class="t" style="left:755.00px;top:457.50px;font-size:13px;line-height:16px;color:#000000;letter-spacing:0.463px;-webkit-text-stroke:0.2px #000">#Missing</div>
<div class="t" style="left:816.00px;top:457.50px;font-size:13px;line-height:16px;color:#000000;letter-spacing:0.463px;-webkit-text-stroke:0.2px #000">#Missing</div>
<div class="t" style="left:39.30px;top:477.50px;font-size:13px;line-height:16px;color:#000000;letter-spacing:-0.419px;-webkit-text-stroke:0.2px #000">P_160</div>
<div class="t" style="left:82.00px;top:477.50px;font-size:13px;line-height:16px;color:#000000;letter-spacing:0.258px;-webkit-text-stroke:0.2px #000">4110</div>
<div class="t" style="left:116.00px;top:477.50px;font-size:13px;line-height:16px;color:#000000;letter-spacing:0.599px;-webkit-text-stroke:0.2px #000">410</div>
<div class="t" style="left:161.23px;top:477.50px;font-size:13px;line-height:16px;color:#000000;-webkit-text-stroke:0.2px #000">75,000</div>
<div class="t" style="left:222.23px;top:477.50px;font-size:13px;line-height:16px;color:#000000;-webkit-text-stroke:0.2px #000">75,000</div>
<div class="t" style="left:283.23px;top:477.50px;font-size:13px;line-height:16px;color:#000000;-webkit-text-stroke:0.2px #000">75,000</div>
<div class="t" style="left:337.00px;top:477.50px;font-size:13px;line-height:16px;color:#000000;-webkit-text-stroke:0.2px #000">225,000</div>
<div class="t" style="left:405.23px;top:477.50px;font-size:13px;line-height:16px;color:#000000;-webkit-text-stroke:0.2px #000">75,000</div>
<div class="t" style="left:466.23px;top:477.50px;font-size:13px;line-height:16px;color:#000000;-webkit-text-stroke:0.2px #000">75,000</div>
<div class="t" style="left:527.23px;top:477.50px;font-size:13px;line-height:16px;color:#000000;-webkit-text-stroke:0.2px #000">75,000</div>
<div class="t" style="left:581.00px;top:477.50px;font-size:13px;line-height:16px;color:#000000;-webkit-text-stroke:0.2px #000">225,000</div>
<div class="t" style="left:633.00px;top:477.50px;font-size:13px;line-height:16px;color:#000000;letter-spacing:0.463px;-webkit-text-stroke:0.2px #000">#Missing</div>
<div class="t" style="left:694.00px;top:477.50px;font-size:13px;line-height:16px;color:#000000;letter-spacing:0.463px;-webkit-text-stroke:0.2px #000">#Missing</div>
<div class="t" style="left:755.00px;top:477.50px;font-size:13px;line-height:16px;color:#000000;letter-spacing:0.463px;-webkit-text-stroke:0.2px #000">#Missing</div>
<div class="t" style="left:816.00px;top:477.50px;font-size:13px;line-height:16px;color:#000000;letter-spacing:0.463px;-webkit-text-stroke:0.2px #000">#Missing</div>
<div class="t" style="left:39.30px;top:497.50px;font-size:13px;line-height:16px;color:#000000;letter-spacing:-0.419px;-webkit-text-stroke:0.2px #000">P_170</div>
<div class="t" style="left:82.00px;top:497.50px;font-size:13px;line-height:16px;color:#000000;letter-spacing:0.258px;-webkit-text-stroke:0.2px #000">4110</div>
<div class="t" style="left:116.00px;top:497.50px;font-size:13px;line-height:16px;color:#000000;letter-spacing:0.599px;-webkit-text-stroke:0.2px #000">410</div>
<div class="t" style="left:145.00px;top:497.50px;font-size:13px;line-height:16px;color:#000000;letter-spacing:0.463px;-webkit-text-stroke:0.2px #000">#Missing</div>
<div class="t" style="left:206.00px;top:497.50px;font-size:13px;line-height:16px;color:#000000;letter-spacing:0.463px;-webkit-text-stroke:0.2px #000">#Missing</div>
<div class="t" style="left:267.00px;top:497.50px;font-size:13px;line-height:16px;color:#000000;letter-spacing:0.463px;-webkit-text-stroke:0.2px #000">#Missing</div>
<div class="t" style="left:328.00px;top:497.50px;font-size:13px;line-height:16px;color:#000000;letter-spacing:0.463px;-webkit-text-stroke:0.2px #000">#Missing</div>
<div class="t" style="left:389.00px;top:497.50px;font-size:13px;line-height:16px;color:#000000;letter-spacing:0.463px;-webkit-text-stroke:0.2px #000">#Missing</div>
<div class="t" style="left:450.00px;top:497.50px;font-size:13px;line-height:16px;color:#000000;letter-spacing:0.463px;-webkit-text-stroke:0.2px #000">#Missing</div>
<div class="t" style="left:511.00px;top:497.50px;font-size:13px;line-height:16px;color:#000000;letter-spacing:0.463px;-webkit-text-stroke:0.2px #000">#Missing</div>
<div class="t" style="left:572.00px;top:497.50px;font-size:13px;line-height:16px;color:#000000;letter-spacing:0.463px;-webkit-text-stroke:0.2px #000">#Missing</div>
<div class="t" style="left:633.00px;top:497.50px;font-size:13px;line-height:16px;color:#000000;letter-spacing:0.463px;-webkit-text-stroke:0.2px #000">#Missing</div>
<div class="t" style="left:694.00px;top:497.50px;font-size:13px;line-height:16px;color:#000000;letter-spacing:0.463px;-webkit-text-stroke:0.2px #000">#Missing</div>
<div class="t" style="left:755.00px;top:497.50px;font-size:13px;line-height:16px;color:#000000;letter-spacing:0.463px;-webkit-text-stroke:0.2px #000">#Missing</div>
<div class="t" style="left:816.00px;top:497.50px;font-size:13px;line-height:16px;color:#000000;letter-spacing:0.463px;-webkit-text-stroke:0.2px #000">#Missing</div>
<svg style="left:73.0px;top:189px" width="10" height="6"><path d="M1 1 L9 1 L5 5 Z" fill="#6b6b6b"/></svg>
<svg style="left:146.0px;top:189px" width="10" height="6"><path d="M1 1 L9 1 L5 5 Z" fill="#6b6b6b"/></svg>
<svg style="left:216.0px;top:189px" width="10" height="6"><path d="M1 1 L9 1 L5 5 Z" fill="#6b6b6b"/></svg>
<svg style="left:95px;top:228px" width="8" height="6"><path d="M0 0.5 L7.5 0.5 L3.75 5 Z" fill="#6d6d6d"/></svg>
<svg style="left:152px;top:228px" width="12" height="10"><path d="M1 0.5 L11 9.5 M11 0.5 L1 9.5" stroke="#bdbdbd" stroke-width="1.6" fill="none"/></svg>
<svg style="left:188px;top:227px" width="13" height="11"><path d="M1 6 L5 10 L12.5 1.5" stroke="#c6c6c6" stroke-width="2.2" fill="none"/></svg>
<div style="position:absolute;left:225px;top:222px;font-family:'Liberation Serif',serif;font-style:italic;font-size:15px;line-height:18px;color:#5a5a5a;font-weight:bold;letter-spacing:0px;-webkit-text-stroke:0.2px #5a5a5a">f<span style="font-size:11px;font-weight:normal">x</span></div>
<svg style="left:12px;top:258px" width="13" height="13"><path d="M12 0 L12 12 L0 12 Z" fill="#b4b4b4"/></svg>
<svg style="left:80px;top:335px" width="7" height="7"><path d="M0 0 L6 0 L0 6 Z" fill="#1e8a3c"/></svg>
<svg style="left:115px;top:335px" width="7" height="7"><path d="M0 0 L6 0 L0 6 Z" fill="#1e8a3c"/></svg>
<svg style="left:80px;top:355px" width="7" height="7"><path d="M0 0 L6 0 L0 6 Z" fill="#1e8a3c"/></svg>
<svg style="left:115px;top:355px" width="7" height="7"><path d="M0 0 L6 0 L0 6 Z" fill="#1e8a3c"/></svg>
<svg style="left:80px;top:375px" width="7" height="7"><path d="M0 0 L6 0 L0 6 Z" fill="#1e8a3c"/></svg>
<svg style="left:115px;top:375px" width="7" height="7"><path d="M0 0 L6 0 L0 6 Z" fill="#1e8a3c"/></svg>
<svg style="left:80px;top:395px" width="7" height="7"><path d="M0 0 L6 0 L0 6 Z" fill="#1e8a3c"/></svg>
<svg style="left:115px;top:395px" width="7" height="7"><path d="M0 0 L6 0 L0 6 Z" fill="#1e8a3c"/></svg>
<svg style="left:80px;top:415px" width="7" height="7"><path d="M0 0 L6 0 L0 6 Z" fill="#1e8a3c"/></svg>
<svg style="left:115px;top:415px" width="7" height="7"><path d="M0 0 L6 0 L0 6 Z" fill="#1e8a3c"/></svg>
<svg style="left:80px;top:435px" width="7" height="7"><path d="M0 0 L6 0 L0 6 Z" fill="#1e8a3c"/></svg>
<svg style="left:115px;top:435px" width="7" height="7"><path d="M0 0 L6 0 L0 6 Z" fill="#1e8a3c"/></svg>
<svg style="left:80px;top:455px" width="7" height="7"><path d="M0 0 L6 0 L0 6 Z" fill="#1e8a3c"/></svg>
<svg style="left:115px;top:455px" width="7" height="7"><path d="M0 0 L6 0 L0 6 Z" fill="#1e8a3c"/></svg>
<svg style="left:80px;top:475px" width="7" height="7"><path d="M0 0 L6 0 L0 6 Z" fill="#1e8a3c"/></svg>
<svg style="left:115px;top:475px" width="7" height="7"><path d="M0 0 L6 0 L0 6 Z" fill="#1e8a3c"/></svg>
<svg style="left:80px;top:495px" width="7" height="7"><path d="M0 0 L6 0 L0 6 Z" fill="#1e8a3c"/></svg>
<svg style="left:115px;top:495px" width="7" height="7"><path d="M0 0 L6 0 L0 6 Z" fill="#1e8a3c"/></svg>
<svg style="left:24px;top:10px" width="14" height="17" viewBox="0 0 14 17"><path d="M1.5 1.5 H8.5 L12.5 5.5 V15.5 H1.5 Z M8.5 1.5 V5.5 H12.5" fill="none" stroke="#fff" stroke-width="1.2"/></svg>
<svg style="left:52px;top:10px" width="16" height="16" viewBox="0 0 16 16"><path d="M1 1 H15 V15 H1 Z" fill="#fff"/><rect x="3.5" y="2.5" width="9" height="5" fill="#217346"/><rect x="4" y="10" width="8" height="5" fill="#217346"/><rect x="6" y="11" width="2" height="4" fill="#fff"/></svg>
<svg style="left:83px;top:9px" width="16" height="18" viewBox="0 0 16 18"><path d="M1.5 1.5 H8.5 L11.5 4.5 V7 M5 16.5 H1.5 V1.5" fill="none" stroke="#fff" stroke-width="1.2"/><circle cx="9" cy="11" r="3.6" fill="none" stroke="#fff" stroke-width="1.6"/><path d="M11.5 13.5 L14.5 16.5" stroke="#fff" stroke-width="2"/></svg>
<svg style="left:110px;top:10px" width="17" height="15" viewBox="0 0 17 15"><path d="M1.5 12.5 V2 H6.3 L7.8 3.5 H13.5 V6" fill="none" stroke="#fff" stroke-width="1.2"/><path d="M1 13.8 L4.2 6.5 H16.5 L13.3 13.8 Z" fill="#f2f2f2"/></svg>
<svg style="left:139px;top:10px" width="16" height="15" viewBox="0 0 16 15"><path d="M1 3 H6 L7.5 1 H14.5 V14 H1 Z" fill="#fff"/><path d="M8 5 L9.1 7.6 L11.8 7.7 L9.7 9.4 L10.4 12 L8 10.5 L5.6 12 L6.3 9.4 L4.2 7.7 L6.9 7.6 Z" fill="#217346"/></svg>
<svg style="left:171px;top:15px" width="8" height="8" viewBox="0 0 8 8"><rect x="0.5" y="0.5" width="7" height="1.2" fill="#fff"/><path d="M0.5 3.5 H7.5 L4 7 Z" fill="#fff"/></svg>
<svg style="left:748px;top:41px" width="10" height="16" viewBox="0 0 10 16"><path d="M5 1 C2.3 1 0.8 3 0.8 5.2 C0.8 7.3 2.5 8.3 2.8 10.2 V12 H7.2 V10.2 C7.5 8.3 9.2 7.3 9.2 5.2 C9.2 3 7.7 1 5 1 Z" fill="none" stroke="#e6efe9" stroke-width="1.1"/><path d="M3 13.8 H7 M3.8 15.3 H6.2" stroke="#e6efe9" stroke-width="1"/></svg>
<svg style="left:82.5px;top:79px" width="6" height="4" viewBox="0 0 6 4"><path d="M0 0 H5.5 L2.75 3 Z" fill="#6d6d6d"/></svg>
<svg style="left:64.5px;top:125px" width="6" height="4" viewBox="0 0 6 4"><path d="M0 0 H5.5 L2.75 3 Z" fill="#6d6d6d"/></svg>
<svg style="left:258px;top:102px" width="6" height="4" viewBox="0 0 6 4"><path d="M0 0 H5.5 L2.75 3 Z" fill="#6d6d6d"/></svg>
<svg style="left:516px;top:102px" width="6" height="4" viewBox="0 0 6 4"><path d="M0 0 H5.5 L2.75 3 Z" fill="#6d6d6d"/></svg>
<svg style="left:783px;top:79px" width="6" height="4" viewBox="0 0 6 4"><path d="M0 0 H5.5 L2.75 3 Z" fill="#6d6d6d"/></svg>
<svg style="left:768px;top:102px" width="6" height="4" viewBox="0 0 6 4"><path d="M0 0 H5.5 L2.75 3 Z" fill="#6d6d6d"/></svg>
<svg style="left:755px;top:125px" width="6" height="4" viewBox="0 0 6 4"><path d="M0 0 H5.5 L2.75 3 Z" fill="#6d6d6d"/></svg>
<svg style="left:892px;top:125px" width="6" height="4" viewBox="0 0 6 4"><path d="M0 0 H5.5 L2.75 3 Z" fill="#6d6d6d"/></svg>
<svg style="left:955px;top:79px" width="6" height="4" viewBox="0 0 6 4"><path d="M0 0 H5.5 L2.75 3 Z" fill="#b3b3b3"/></svg>
<svg style="left:610px;top:129px" width="6" height="4" viewBox="0 0 6 4"><path d="M0 0 H5.5 L2.75 3 Z" fill="#6d6d6d"/></svg>
<svg style="left:5px;top:70px" width="22" height="22" viewBox="0 0 22 22"><path d="M12.6 10.4 L18.8 16.6" stroke="#c89a26" stroke-width="3.8"/><path d="M13.6 10.8 L18.4 15.6" stroke="#f4d46e" stroke-width="1.1"/><circle cx="9.5" cy="7.5" r="4.7" fill="#f6f8fb" stroke="#617089" stroke-width="1.9"/><path d="M7 7.5 H12" stroke="#1e2c40" stroke-width="1.4"/><path d="M9.5 5 V10" stroke="#1e2c40" stroke-width="1.4"/></svg>
<svg style="left:5px;top:93px" width="22" height="22" viewBox="0 0 22 22"><path d="M12.6 10.4 L18.8 16.6" stroke="#c89a26" stroke-width="3.8"/><path d="M13.6 10.8 L18.4 15.6" stroke="#f4d46e" stroke-width="1.1"/><circle cx="9.5" cy="7.5" r="4.7" fill="#f6f8fb" stroke="#617089" stroke-width="1.9"/><path d="M7 7.5 H12" stroke="#1e2c40" stroke-width="1.4"/></svg>
<svg style="left:6px;top:115px" width="22" height="22" viewBox="0 0 22 22"><rect x="7.1" y="4" width="4.9" height="2.9" rx="0.4" fill="#3a78de"/><rect x="8.299999999999999" y="5.1" width="2.5" height="0.8" fill="#a9c8f5"/><rect x="13.2" y="4" width="4.9" height="2.9" rx="0.4" fill="#3a78de"/><rect x="14.399999999999999" y="5.1" width="2.5" height="0.8" fill="#a9c8f5"/><rect x="4" y="11" width="4.9" height="2.9" rx="0.4" fill="#3a78de"/><rect x="5.2" y="12.1" width="2.5" height="0.8" fill="#a9c8f5"/><rect x="4" y="15" width="4.9" height="2.9" rx="0.4" fill="#3a78de"/><rect x="5.2" y="16.1" width="2.5" height="0.8" fill="#a9c8f5"/><path d="M14.4 9.5 V14.2 H11" fill="none" stroke="#2b3850" stroke-width="1.2"/><path d="M13 10.2 L14.4 8 L15.8 10.2 Z M11.6 12.8 L9.9 14.2 L11.6 15.6 Z" fill="#2b3850"/></svg>
<svg style="left:97px;top:74px" width="15" height="14" viewBox="0 0 15 14"><rect x="0.5" y="0.5" width="13" height="11.5" rx="1" fill="#eef3fb" stroke="#7b8aa3"/><rect x="1" y="1" width="12" height="3" fill="#3e77d6"/><path d="M6 8.5 H14.5 M10.2 4.5 V13" stroke="#1b2a40" stroke-width="2"/></svg>
<svg style="left:97px;top:97px" width="15" height="14" viewBox="0 0 15 14"><rect x="0.5" y="0.5" width="13" height="11.5" rx="1" fill="#eef3fb" stroke="#7b8aa3"/><rect x="1" y="1" width="12" height="3" fill="#3e77d6"/><path d="M6 9.8 H14.5" stroke="#1b2a40" stroke-width="2"/></svg>
<svg style="left:202px;top:70px" width="22" height="22" viewBox="0 0 22 22"><rect x="5" y="4" width="1.2" height="1.2" fill="#2b7be6"/><rect x="7" y="4" width="1.2" height="1.2" fill="#2b7be6"/><rect x="9" y="4" width="1.2" height="1.2" fill="#2b7be6"/><rect x="11" y="4" width="1.2" height="1.2" fill="#2b7be6"/><rect x="5" y="6" width="1.2" height="1.2" fill="#2b73dc"/><rect x="5" y="8" width="1.2" height="1.2" fill="#2b73dc"/><rect x="5" y="10" width="1.2" height="1.2" fill="#2b73dc"/><rect x="5" y="12" width="1.2" height="1.2" fill="#2b73dc"/><rect x="5" y="14" width="1.2" height="1.2" fill="#2b73dc"/><rect x="5" y="16" width="1.2" height="1.2" fill="#1e3f78"/><rect x="7" y="16" width="1.2" height="1.2" fill="#1e3f78"/><rect x="9" y="16" width="1.2" height="1.2" fill="#1e3f78"/><rect x="11" y="16" width="1.2" height="1.2" fill="#1e3f78"/><rect x="13" y="16" width="1.2" height="1.2" fill="#1e3f78"/><rect x="15" y="16" width="1.2" height="1.2" fill="#1e3f78"/><rect x="15" y="10" width="1.2" height="1.2" fill="#1e3f78"/><rect x="15" y="12" width="1.2" height="1.2" fill="#1e3f78"/><rect x="15" y="14" width="1.2" height="1.2" fill="#1e3f78"/><defs><linearGradient id="msg" x1="0" y1="0" x2="0" y2="1"><stop offset="0" stop-color="#8b95a3"/><stop offset="1" stop-color="#4f5a6b"/></linearGradient></defs><rect x="7" y="6" width="3" height="3" fill="url(#msg)"/><rect x="7" y="10" width="3" height="3" fill="url(#msg)"/><rect x="11" y="8" width="3" height="3" fill="url(#msg)"/><rect x="11" y="12" width="3" height="3" fill="url(#msg)"/><path d="M13 5.5 H18 M15.5 3 V8" stroke="#2a3448" stroke-width="1.3"/></svg>
<svg style="left:202px;top:92px" width="22" height="22" viewBox="0 0 22 22"><rect x="10.5" y="4.5" width="6.5" height="8" fill="#fff" stroke="#7e8794" stroke-width="1"/><path d="M12.3 7.3 C12.3 5.6 15.3 5.6 15.3 7.3 C15.3 8.5 13.8 8.6 13.8 10" fill="none" stroke="#2a3550" stroke-width="1.2"/><rect x="13.3" y="10.8" width="1.1" height="1.1" fill="#2a3550"/><path d="M4 8 L7 6.2 L10.2 8 L7.2 9.8 Z" fill="#eef2f7"/><path d="M4 8 L7.2 9.8 V14.6 L4 12.8 Z" fill="#c3cbd6"/><path d="M7.2 9.8 L10.2 8 V12.8 L7.2 14.6 Z" fill="#4d5b73"/><path d="M17 9.8 L10.2 16.5" stroke="#e8b81c" stroke-width="2.6"/><path d="M17.8 9.2 L16.2 10.8" stroke="#d8201f" stroke-width="3"/><path d="M10.6 16.1 L8.8 17.9" stroke="#111" stroke-width="2"/></svg>
<svg style="left:206px;top:118px" width="15" height="16" viewBox="0 0 15 16"><path d="M0.5 4 V0.5 H4 M10 0.5 H13.5 V4 M13.5 11 V14.5 H10 M4 14.5 H0.5 V11" fill="none" stroke="#e0242a" stroke-width="1"/><path d="M2.5 2.5 H9 L11.5 5 V12.5 H2.5 Z" fill="#f4f6f9" stroke="#6f7888"/><path d="M4 5.5 H7.5 M4 7.5 H7.5 M4 9.5 H7.5 M8.5 6.5 H10.5 M8.5 10.5 H10.5" stroke="#3d4656" stroke-width="1"/><path d="M9.5 6.5 V10.5" stroke="#3d4656" stroke-width="1"/></svg>
<svg style="left:326px;top:70px" width="22" height="22" viewBox="0 0 22 22"><rect x="5.2" y="3.4" width="7.4" height="7.4" rx="1" fill="#7d8799"/><rect x="6.0" y="4.3" width="5.8" height="1.6" fill="#2f63d8"/><rect x="6.1000000000000005" y="6.6" width="1.6" height="1.3" fill="#fff"/><rect x="8.1" y="6.6" width="1.6" height="1.3" fill="#fff"/><rect x="10.100000000000001" y="6.6" width="1.6" height="1.3" fill="#fff"/><rect x="6.1000000000000005" y="8.6" width="1.6" height="1.3" fill="#fff"/><rect x="8.1" y="8.6" width="1.6" height="1.3" fill="#fff"/><rect x="10.100000000000001" y="8.6" width="1.6" height="1.3" fill="#fff"/><rect x="11.2" y="9.3" width="7.4" height="7.4" rx="1" fill="#7d8799"/><rect x="12.0" y="10.200000000000001" width="5.8" height="1.6" fill="#2f63d8"/><rect x="12.1" y="12.5" width="1.6" height="1.3" fill="#fff"/><rect x="14.1" y="12.5" width="1.6" height="1.3" fill="#fff"/><rect x="16.1" y="12.5" width="1.6" height="1.3" fill="#fff"/><rect x="12.1" y="14.5" width="1.6" height="1.3" fill="#fff"/><rect x="14.1" y="14.5" width="1.6" height="1.3" fill="#fff"/><rect x="16.1" y="14.5" width="1.6" height="1.3" fill="#fff"/><path d="M14.2 3.8 H16.5 V7" fill="none" stroke="#1f2c44" stroke-width="1.3"/><path d="M14 6.2 H19 L16.5 9 Z" fill="#1f2c44"/></svg>
<svg style="left:326px;top:93px" width="22" height="22" viewBox="0 0 22 22"><path d="M5 6 L9.4 3.5 L13.8 6 L9.4 8.5 Z" fill="#e2e2e2"/><path d="M5 6 L9.4 8.5 V15 L5 12.5 Z" fill="#c4c4c4"/><path d="M9.4 8.5 L13.8 6 V12.5 L9.4 15 Z" fill="#a9a9a9"/><path d="M10 5.2 H17.2 V8" fill="none" stroke="#a8a8a8" stroke-width="1.2"/><path d="M15.4 7.5 H19 L17.2 9.5 Z" fill="#a8a8a8"/><path d="M11.2 4 L9.5 5.3 L11.2 6.5 Z" fill="#a8a8a8"/><path d="M15.4 12 L17.2 11 L19 12 V16 L17.2 17 L15.4 16 Z" fill="#c2c2c2"/><path d="M17.2 13 V17 M15.4 12 L17.2 13 L19 12" fill="none" stroke="#a5a5a5" stroke-width="0.7"/></svg>
<svg style="left:330px;top:118px" width="17" height="17" viewBox="0 0 17 17"><rect x="0.2" y="0.2" width="11.6" height="11.2" rx="1.3" fill="#5a54b2"/><rect x="0.8" y="0.8" width="10.4" height="10" rx="0.8" fill="none" stroke="#7a74cc" stroke-width="0.6"/><rect x="3.2" y="0.8" width="5.6" height="3.6" fill="#d3cff5"/><rect x="3.2" y="7.5" width="1.8" height="3" fill="#fff"/><rect x="5.8" y="5.5" width="9.6" height="9.6" rx="1" fill="#f8f9fb" stroke="#6b7688" stroke-width="1"/><path d="M7.5 8.6 H13.7 M7.5 11.6 H13.7 M9.3 7 V13.8 M12 7 V13.8" stroke="#7b8595" stroke-width="1.1"/></svg>
<svg style="left:451px;top:72px" width="17" height="17" viewBox="0 0 17 17"><rect x="0.2" y="0.2" width="11.6" height="11.2" rx="1.3" fill="#5a54b2"/><rect x="0.8" y="0.8" width="10.4" height="10" rx="0.8" fill="none" stroke="#7a74cc" stroke-width="0.6"/><rect x="3.2" y="0.8" width="5.6" height="3.6" fill="#d3cff5"/><rect x="3.2" y="7.5" width="1.8" height="3" fill="#fff"/><rect x="5.8" y="5.5" width="9.6" height="9.6" rx="1" fill="#f8f9fb" stroke="#6b7688" stroke-width="1"/><path d="M7.5 8.6 H13.7 M7.5 11.6 H13.7 M9.3 7 V13.8 M12 7 V13.8" stroke="#7b8595" stroke-width="1.1"/></svg>
<svg style="left:448px;top:92px" width="22" height="22" viewBox="0 0 22 22"><rect x="4.5" y="4.3" width="7.6" height="7.4" rx="0.8" fill="#f7f9fd" stroke="#707c90" stroke-width="1"/><rect x="6.4" y="6.2" width="7.6" height="7.4" rx="0.8" fill="#f7f9fd" stroke="#707c90" stroke-width="1"/><rect x="8.6" y="8.3" width="8" height="8" rx="0.8" fill="#fbfcff" stroke="#68748a" stroke-width="1.1"/><rect x="10.2" y="10" width="1" height="1" fill="#5b92e6"/><rect x="10.2" y="12" width="1" height="2.4" fill="#5b92e6"/><rect x="12.2" y="10" width="2" height="1" fill="#5b92e6"/><path d="M11.8 14.6 L15.2 11.2 M13 11.2 H15.2 V13.4" fill="none" stroke="#1c2740" stroke-width="1.3"/></svg>
<svg style="left:595px;top:70px" width="36" height="36" viewBox="0 0 36 36"><defs><linearGradient id="rg" x1="0" y1="0" x2="1" y2="1"><stop offset="0" stop-color="#d6e9ff"/><stop offset="0.55" stop-color="#8dbdf5"/><stop offset="1" stop-color="#3f86e3"/></linearGradient></defs>
<g id="ra"><path d="M13.5 7.61 L13.5 3.5 L22.5 11.5 L13.5 19.5 L13.5 11.38 A6.3 6.3 0 0 0 12.34 23.2 L10.77 26.56 A10 10 0 0 1 13.5 7.61 Z" fill="url(#rg)" stroke="#1f5fc8" stroke-width="1.1" stroke-linejoin="round"/></g>
<g transform="rotate(180 18.5 18)"><path d="M13.5 7.61 L13.5 3.5 L22.5 11.5 L13.5 19.5 L13.5 11.38 A6.3 6.3 0 0 0 12.34 23.2 L10.77 26.56 A10 10 0 0 1 13.5 7.61 Z" fill="url(#rg)" stroke="#1f5fc8" stroke-width="1.1" stroke-linejoin="round"/></g></svg>
<svg style="left:648px;top:72px" width="34" height="33" viewBox="0 0 34 33"><defs><linearGradient id="pvb" x1="0" y1="0" x2="0" y2="1"><stop offset="0" stop-color="#eef5fd"/><stop offset="1" stop-color="#d3e3f8"/></linearGradient><linearGradient id="pvd" x1="0" y1="0" x2="1" y2="0"><stop offset="0" stop-color="#f4f4f4"/><stop offset="1" stop-color="#9c9c9c"/></linearGradient></defs><rect x="0.7" y="0.7" width="32" height="31" fill="url(#pvb)" stroke="#2f63d8" stroke-width="1.4"/><rect x="1.4" y="1.4" width="30.6" height="4.8" fill="#a9d0fa"/><rect x="1.4" y="6.2" width="30.6" height="0.8" fill="#5d8fe0"/><path d="M27 2.4 L29.6 5 M29.6 2.4 L27 5" stroke="#1c3350" stroke-width="1"/><rect x="4" y="8.3" width="25.6" height="5.4" fill="#fff" stroke="#3a6fd8" stroke-width="1.1"/><rect x="24" y="8.9" width="5" height="4.2" fill="url(#pvd)"/><path d="M25.3 10.200000000000001 L26.5 11.9 L27.7 10.200000000000001" fill="none" stroke="#222" stroke-width="0.9"/><path d="M5.8 11.0 H22.5" stroke="#8a8a8a" stroke-width="1" stroke-dasharray="3.3 1.2"/><rect x="4" y="15.3" width="25.6" height="5.4" fill="#fff" stroke="#3a6fd8" stroke-width="1.1"/><rect x="24" y="15.9" width="5" height="4.2" fill="url(#pvd)"/><path d="M25.3 17.2 L26.5 18.900000000000002 L27.7 17.2" fill="none" stroke="#222" stroke-width="0.9"/><path d="M5.8 18.0 H22.5" stroke="#8a8a8a" stroke-width="1" stroke-dasharray="3.3 1.2"/><rect x="4.5" y="23" width="11.4" height="5.4" rx="1.3" fill="#c9cdd3" stroke="#3a6fd8" stroke-width="1"/><rect x="22.9" y="23" width="7" height="5.4" rx="1.3" fill="#fff" stroke="#3a6fd8" stroke-width="1"/><rect x="25.9" y="24.8" width="1" height="1.8" fill="#222"/></svg>
<svg style="left:694px;top:68px" width="22" height="22" viewBox="0 0 22 22"><rect x="4.5" y="4.3" width="13" height="12" fill="#fafbfe" stroke="#9aa3b2" stroke-width="1"/><path d="M4.5 8.3 H17.5 M4.5 12.3 H17.5 M8.8 4.3 V16.3 M13.2 4.3 V16.3" stroke="#aeb6c3" stroke-width="0.9"/><rect x="4.8" y="8.3" width="4" height="4" fill="#e2ecfb" stroke="#2f63d8" stroke-width="1.1"/><path d="M17.31 12.57 L18.76 12.73 L18.76 14.07 L17.31 14.23 L17.11 14.85 L16.81 15.44 L17.72 16.57 L16.77 17.52 L15.64 16.61 L15.05 16.91 L14.43 17.11 L14.27 18.56 L12.93 18.56 L12.77 17.11 L12.15 16.91 L11.56 16.61 L10.43 17.52 L9.48 16.57 L10.39 15.44 L10.09 14.85 L9.89 14.23 L8.44 14.07 L8.44 12.73 L9.89 12.57 L10.09 11.95 L10.39 11.36 L9.48 10.23 L10.43 9.28 L11.56 10.19 L12.15 9.89 L12.77 9.69 L12.93 8.24 L14.27 8.24 L14.43 9.69 L15.05 9.89 L15.64 10.19 L16.77 9.28 L17.72 10.23 L16.81 11.36 L17.11 11.95 Z" fill="#bfe8b8" stroke="#107a1a" stroke-width="1.3" stroke-linejoin="round"/><circle cx="13.6" cy="13.4" r="1.8" fill="#e9f8e6" stroke="#3a8a3a" stroke-width="0.8"/></svg>
<svg style="left:700px;top:96px" width="12" height="13" viewBox="0 0 12 13"><rect x="0.5" y="0.5" width="11" height="12" rx="1" fill="#4b5a72"/><rect x="1.8" y="1.8" width="8.4" height="2.6" fill="#5aa0f0"/><rect x="1.8" y="6" width="2.2" height="2" fill="#fff"/><rect x="4.9" y="6" width="2.2" height="2" fill="#fff"/><rect x="8" y="6" width="2.2" height="2" fill="#fff"/><rect x="1.8" y="9.2" width="2.2" height="2" fill="#fff"/><rect x="4.9" y="9.2" width="2.2" height="2" fill="#fff"/><rect x="8" y="9.2" width="2.2" height="2" fill="#fff"/></svg>
<svg style="left:694px;top:114px" width="22" height="22" viewBox="0 0 22 22"><rect x="5.5" y="7.3" width="13" height="10.2" rx="1.2" fill="#fff" stroke="#68758a" stroke-width="1.1"/><rect x="15.2" y="7.8" width="2.8" height="9.2" fill="#5f6c82"/><rect x="15.8" y="11.5" width="1.8" height="2" fill="#c3cad6"/><circle cx="16.6" cy="9.6" r="0.6" fill="#fff"/><circle cx="16.6" cy="15.2" r="0.6" fill="#fff"/><ellipse cx="8.3" cy="10.7" rx="1.2" ry="1.6" fill="none" stroke="#1f2b40" stroke-width="1"/><ellipse cx="8.3" cy="14.1" rx="1.2" ry="1.6" fill="none" stroke="#1f2b40" stroke-width="1"/><ellipse cx="12.2" cy="10.7" rx="1.2" ry="1.6" fill="none" stroke="#1f2b40" stroke-width="1"/><ellipse cx="12.2" cy="14.1" rx="1.2" ry="1.6" fill="none" stroke="#1f2b40" stroke-width="1"/></svg>
<svg style="left:799px;top:74px" width="15" height="13" viewBox="0 0 15 13"><rect x="2" y="1.5" width="7" height="8" fill="#fff" stroke="#8e9bb0" stroke-width="1"/><path d="M0.5 0.5 L11 10.5" stroke="#1f2d44" stroke-width="2"/><path d="M14 12.5 H7.5 L14 6 Z" fill="#1f2d44"/></svg>
<svg style="left:799px;top:95px" width="15" height="15" viewBox="0 0 15 15"><circle cx="7.5" cy="4.5" r="3.8" fill="#dfe7f0" stroke="#7a8696" stroke-width="1.4"/><path d="M4.8 7.2 L1 11" stroke="#d3a53b" stroke-width="2.6" stroke-linecap="round"/><rect x="5.5" y="6.5" width="8.5" height="8" fill="#fff" stroke="#2e9d3a" stroke-width="1.2"/><path d="M7.5 8.5 L12 12.8 M12 8.5 L7.5 12.8" stroke="#2e9d3a" stroke-width="1.5"/></svg>
<svg style="left:796px;top:114px" width="22" height="22" viewBox="0 0 22 22"><defs><linearGradient id="dbg" x1="0" y1="0" x2="1" y2="0"><stop offset="0" stop-color="#7b79b0"/><stop offset="0.45" stop-color="#f4f4fb"/><stop offset="1" stop-color="#6f6da8"/></linearGradient><linearGradient id="trg" x1="0" y1="0" x2="0" y2="1"><stop offset="0" stop-color="#9ef08a"/><stop offset="1" stop-color="#22a82a"/></linearGradient></defs><path d="M4.3 6.5 V16.5 A5.7 2 0 0 0 15.7 16.5 V6.5" fill="url(#dbg)" stroke="#5d5b94" stroke-width="0.8"/><ellipse cx="10" cy="6.5" rx="5.7" ry="1.8" fill="#d8d8ee" stroke="#5d5b94" stroke-width="0.8"/><path d="M4.3 10 A5.7 1.8 0 0 0 15.7 10 M4.3 13.4 A5.7 1.8 0 0 0 15.7 13.4" fill="none" stroke="#5d5b94" stroke-width="0.9"/><path d="M12.2 9 L16.8 13 L12.2 17 Z" fill="url(#trg)"/></svg>
<svg style="left:905px;top:72px" width="16" height="16" viewBox="0 0 16 16"><rect x="1" y="0.8" width="11.5" height="13.5" fill="#f4f4f4" stroke="#a8a8a8"/><rect x="1" y="0.8" width="11.5" height="1.6" fill="#a8a8a8"/><path d="M3 4.5 H10.5 M3 6.5 H10.5 M3 8.5 H10.5 M3 10.5 H10.5 M3 12.5 H8.5" stroke="#a0a0a0" stroke-width="0.9"/><path d="M9.8 11.5 H14.5 L12.15 14.5 Z" fill="#8f8f8f"/></svg>
</body></html>
